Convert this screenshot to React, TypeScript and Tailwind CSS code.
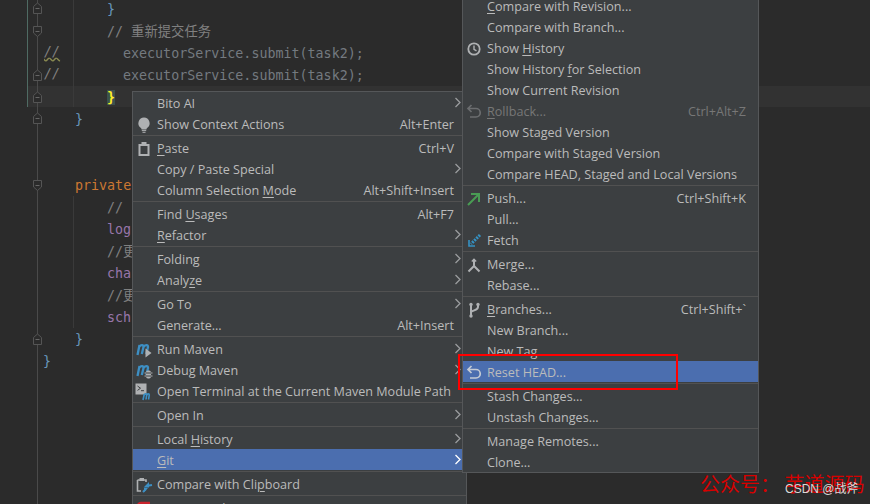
import React from "react";

type Row = { t?: string; u?: number; s?: string; sub?: boolean; icon?: React.ReactNode; sel?: boolean; off?: boolean } | "sep";

const Lbl = ({ t, u }: { t: string; u?: number }) =>
  u === undefined ? <>{t}</> : (<>{t.slice(0, u)}<span className="underline underline-offset-2">{t[u]}</span>{t.slice(u + 1)}</>);

const I = ({ children }: { children: React.ReactNode }) => (
  <svg width="18" height="18" viewBox="0 0 18 18" fill="none">{children}</svg>
);
const Undo = ({ c }: { c: string }) => (
  <I><path d="M6.500 2 3 5.500 6.500 9M3.500 5.500H11a4 4 0 0 1 0 8.500H5" stroke={c} strokeWidth="1.7" /></I>
);
const M = ({ d = "M2.500 14 4.500 4M4 6c2-2.500 4.500-2.500 4.500 0L6.800 13M8.500 6c2-2.500 4.500-2.500 4.500 0L11.300 13", w = 2.3 }: { d?: string; w?: number }) => (
  <path d={d} stroke="#3d8fc4" strokeWidth={w} />
);
const icons = {
  bulb: <I><path d="M9 1.500a5.700 5.700 0 0 0-3.400 10.200c.6.500 1 1 1 1.800h4.800c0-.8.400-1.300 1-1.800A5.700 5.700 0 0 0 9 1.500Z" fill="#afb1b3" /><path d="M6.800 14.600h4.400M7.500 16.300h3" stroke="#afb1b3" /></I>,
  paste: <I><path d="M3.500 4h11v12h-11ZM5.500 6v8h7V6Z" fill="#afb1b3" fillRule="evenodd" /><rect x="6.500" y="2" width="5" height="3.500" fill="#afb1b3" /></I>,
  run: <I><M /><path d="M10.500 7.500l6 4.500-6 4.500Z" fill="#afb1b3" /></I>,
  debug: <I><M /><rect x="11" y="8.500" width="5" height="8" rx="2" fill="#afb1b3" /><path d="M9 11h9M9 14h9" stroke="#3c3f41" /><path d="M9.500 11h8M9.500 14h8" stroke="#afb1b3" strokeDasharray="1.500 5" /></I>,
  term: <I><rect x="0.500" y="0.500" width="11" height="11" fill="#afb1b3" /><path d="M2.500 3l3 2.200-3 2.200" stroke="#3c3f41" /><path d="M6 7.700h3" stroke="#3c3f41" /><M d="M8 17l1.300-6M9.200 12c1-1.500 2.500-1.500 2.500 0L11 16.500M11.800 12c1-1.500 2.500-1.500 2.500 0L13.500 16.500" w={1.6} /></I>,
  cmp: <I><path d="M2.500 4H11v2M2.500 4v11H6" stroke="#afb1b3" strokeWidth="1.600" /><rect x="4.500" y="2" width="4.500" height="3" fill="#afb1b3" /><path d="M8 16l3-3M11 10l6-1" stroke="#3d8fc4" strokeWidth="2" /><path d="M14 6v5.500h-5.500Z M9 16v-4h4Z" fill="#3d8fc4" /></I>,
  clock: <I><circle cx="9" cy="9" r="5.700" stroke="#afb1b3" strokeWidth="1.800" /><path d="M9 5.500V9.300l2.500 1.500" stroke="#afb1b3" strokeWidth="1.400" /></I>,
  push: <I><path d="M3 15 13 5M6 4h8v8" stroke="#499c54" strokeWidth="2" /></I>,
  fetch: <I><path d="M15 3 6 12" stroke="#3592c4" strokeWidth="3" strokeDasharray="2 1" /><path d="M4 8v6h6" stroke="#3592c4" strokeWidth="1.600" /></I>,
  merge: <I><path d="M9 3v7L3.500 15.500M9 10l5.500 5.500" stroke="#afb1b3" strokeWidth="2" /><path d="M6.800 5.500 9 3.200l2.200 2.300" stroke="#afb1b3" strokeWidth="1.300" /></I>,
  branch: <I><path d="M6 3v12M13 3v3c0 3-4 3-7 5" stroke="#afb1b3" strokeWidth="2" /><circle cx="6" cy="3.500" r="1.700" fill="#afb1b3" /><circle cx="6" cy="15" r="1.700" fill="#afb1b3" /><circle cx="13" cy="3.500" r="1.700" fill="#afb1b3" /></I>,
  red: <I><path d="M3 10V6a3 3 0 0 1 3-3h9" stroke="#c9232d" strokeWidth="2.500" /></I>,
};

const left: Row[] = [
  { t: "Bito AI", sub: true }, { t: "Show Context Actions", s: "Alt+Enter", icon: icons.bulb }, "sep",
  { t: "Paste", u: 0, s: "Ctrl+V", icon: icons.paste }, { t: "Copy / Paste Special", sub: true }, { t: "Column Selection Mode", u: 17, s: "Alt+Shift+Insert" }, "sep",
  { t: "Find Usages", u: 5, s: "Alt+F7" }, { t: "Refactor", u: 0, sub: true }, "sep",
  { t: "Folding", sub: true }, { t: "Analyze", u: 5, sub: true }, "sep",
  { t: "Go To", sub: true }, { t: "Generate...", s: "Alt+Insert" }, "sep",
  { t: "Run Maven", sub: true, icon: icons.run }, { t: "Debug Maven", sub: true, icon: icons.debug }, { t: "Open Terminal at the Current Maven Module Path", icon: icons.term }, "sep",
  { t: "Open In", sub: true }, "sep",
  { t: "Local History", u: 6, sub: true }, { t: "Git", u: 0, sub: true, sel: true }, "sep",
  { t: "Compare with Clipboard", u: 16, icon: icons.cmp }, "sep",
  { t: "Compare Changes", icon: icons.red },
];

const right: Row[] = [
  { t: "Compare with Revision...", u: 0 }, { t: "Compare with Branch..." }, { t: "Show History", u: 5, icon: icons.clock }, { t: "Show History for Selection", u: 13 }, { t: "Show Current Revision" },
  { t: "Rollback...", u: 0, s: "Ctrl+Alt+Z", off: true, icon: <Undo c="#6b6d6f" /> }, { t: "Show Staged Version" }, { t: "Compare with Staged Version" }, { t: "Compare HEAD, Staged and Local Versions" }, "sep",
  { t: "Push...", s: "Ctrl+Shift+K", icon: icons.push }, { t: "Pull..." }, { t: "Fetch", icon: icons.fetch }, "sep",
  { t: "Merge...", icon: icons.merge }, { t: "Rebase..." }, "sep",
  { t: "Branches...", u: 0, s: "Ctrl+Shift+`", icon: icons.branch }, { t: "New Branch..." }, { t: "New Tag..." }, { t: "Reset HEAD...", sel: true, icon: <Undo c="#c5cbd4" /> }, "sep",
  { t: "Stash Changes..." }, { t: "Unstash Changes..." }, "sep",
  { t: "Manage Remotes..." }, { t: "Clone..." },
];

function Menu({ rows, cls, shortcutPad }: { rows: Row[]; cls: string; shortcutPad: string }) {
  return (
    <div className={`absolute flex flex-col bg-[#3c3f41] border border-[#555759] font-['Open_Sans','Noto_Sans',sans-serif] text-[12.6px] text-[#bbbbbb] ${cls}`}>
      {rows.map((r, i) =>
        r === "sep" ? (
          <div key={i} className="h-[3px] shrink-0 flex items-center"><div className="h-px w-full bg-[#515151]" /></div>
        ) : (
          <div key={i} className={`h-[21px] shrink-0 flex items-center pl-[24px] pt-[4px] relative ${r.sel ? "bg-[#4b6eaf]" : ""} ${r.off ? "text-[#777777]" : ""}`}>
            {r.icon && <span className="absolute left-[2px] top-[3px] flex">{r.icon}</span>}
            <span className="whitespace-nowrap"><Lbl t={r.t!} u={r.u} /></span>
            {r.s && <span className={`ml-auto whitespace-nowrap ${shortcutPad}`}>{r.s}</span>}
            {r.sub && (
              <svg className="absolute right-[4px] top-[5px]" width="8" height="11" viewBox="0 0 8 11" fill="none">
                <path d="M1.500 1 6 5.500 1.500 10" stroke={r.sel ? "#ffffff" : "#9a9c9e"} strokeWidth="1.300" />
              </svg>
            )}
          </div>
        ),
      )}
    </div>
  );
}

const Fold = ({ y, up }: { y: number; up?: boolean }) => (
  <svg className="absolute left-[32px]" style={{ top: y }} width="11" height="13" viewBox="0 0 11 13" fill="#2b2b2b">
    <path d={up ? "M1.500 4.500 5.500 1l4 3.500V11.500h-8Z" : "M1.500 1.500h8V8l-4 3.500-4-3.500Z"} stroke="#555555" />
    <path d="M3.500 6.500h4" stroke="#666666" />
  </svg>
);

const c = "text-[#808080]";
const g = "text-[#747a80]";
const lines: React.ReactNode[] = [
  <span className="ml-[107px] text-[#6897bb]">{"}"}</span>,
  <span className={`ml-[107px] ${c}`}>// 重新提交任务</span>,
  <span className={`ml-[123px] ${g}`}>executorService.submit(task2);</span>,
  <span className={`ml-[123px] ${g}`}>executorService.submit(task2);</span>,
  <span className="ml-[107px] text-[#ffef28] bg-[#3b514d] font-bold">{"}"}</span>,
  <span className="ml-[75px] text-[#6897bb]">{"}"}</span>,
  <span />,
  <span />,
  <span className="ml-[75px] text-[#cc7832]">private</span>,
  <span className={`ml-[107px] ${c}`}>//</span>,
  <span className="ml-[107px] text-[#9876aa]">log</span>,
  <span className={`ml-[107px] ${c}`}>//更</span>,
  <span className="ml-[107px] text-[#9876aa]">cha</span>,
  <span className={`ml-[107px] ${c}`}>//更</span>,
  <span className="ml-[107px] text-[#9876aa]">sch</span>,
  <span className="ml-[75px] text-[#6897bb]">{"}"}</span>,
  <span className="ml-[43px] text-[#6897bb]">{"}"}</span>,
];

export default function App() {
  return (
    <div className="relative w-[870px] h-[504px] overflow-hidden bg-[#2b2b2b]">
      <div className="absolute left-[28px] right-0 top-[86px] h-[21px] bg-[#323232]" />
      <div className="absolute left-[27px] top-0 h-[107px] w-px bg-[#4f6b63]" />
      <div className="absolute left-[37px] top-0 h-[504px] w-px bg-[#4a4a4a]" />
      <div className="absolute left-[73px] top-0 h-[107px] w-px bg-[#3a3a3a]" />
      <div className="absolute left-[73px] top-[196px] h-[132px] w-px bg-[#3a3a3a]" />
      <div className="relative -mt-px flex flex-col font-['DejaVu_Sans_Mono','Noto_Sans_CJK_SC',monospace] text-[13.33px]">
        {lines.map((l, i) => (
          <div key={i} className="h-[22px] leading-[22px] whitespace-pre">{l}</div>
        ))}
      </div>
      <span className={`absolute left-[44px] top-[42px] font-['DejaVu_Sans_Mono',monospace] text-[13.33px] italic ${c} underline decoration-wavy decoration-[#8a8a50]`}>//</span>
      <span className={`absolute left-[44px] top-[64px] font-['DejaVu_Sans_Mono',monospace] text-[13.33px] italic ${c}`}>//</span>
      {[2, 69, 91, 112, 333].map((y) => <Fold key={y} y={y} up />)}
      <Fold y={25} />
      <Fold y={179} />

      <Menu rows={left} cls="left-[132px] top-[91px] w-[335px]" shortcutPad="mr-[12px]" />
      <Menu rows={right} cls="left-[462px] top-[-6px] w-[297px]" shortcutPad="mr-[12px]" />

      <div className="absolute left-[458px] top-[354px] w-[220px] h-[36px] border-2 border-[#ff0000]" />
      <span className="absolute left-[700px] top-[471px] whitespace-nowrap font-['Noto_Sans_CJK_SC',sans-serif] text-[20px] leading-[26px] text-[#d80000]">公众号： 芋道源码</span>
      <span className="absolute left-[785px] top-[481px] whitespace-nowrap font-['Liberation_Sans','Noto_Sans_CJK_SC',sans-serif] text-[12px] leading-[16px] text-[#d8d8d8]">CSDN @战斧</span>
    </div>
  );
}
